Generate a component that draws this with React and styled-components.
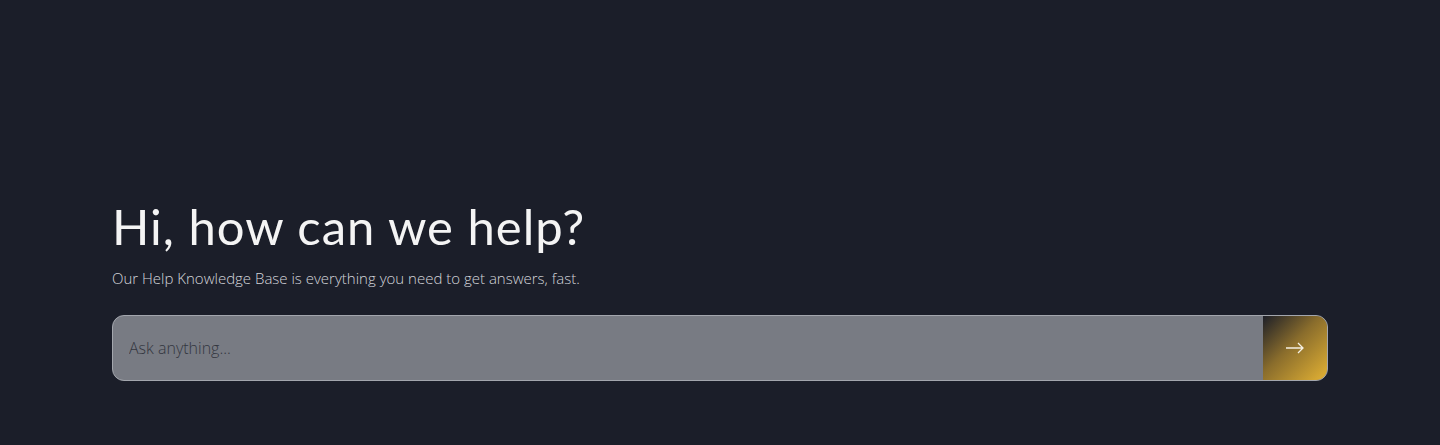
import React from "react";
import styled, { createGlobalStyle } from "styled-components";

const GlobalStyle = createGlobalStyle`
  html, body {
    margin: 0;
    padding: 0;
    background: #1b1e29;
  }
  body {
    font-family: "Open Sans", sans-serif;
  }
`;

const Hero = styled.section`
  min-height: 445px;
  box-sizing: border-box;
  padding: 196px 112px 0;
  background: #1b1e29;
`;

const Title = styled.h1`
  margin: 0;
  font-family: "Lato", sans-serif;
  font-weight: 400;
  font-size: 49px;
  line-height: 60px;
  letter-spacing: 1px;
  color: #f4f4f4;
`;

const Subtitle = styled.p`
  margin: 10px 0 0;
  font-family: "Open Sans", sans-serif;
  font-weight: 300;
  font-size: 15px;
  line-height: 24px;
  color: #d3d5da;
`;

const SearchBox = styled.form`
  margin-top: 25px;
  display: flex;
  height: 66px;
  box-sizing: border-box;
  border: 1px solid #a3a6ad;
  border-radius: 12px;
  overflow: hidden;
  background: #787b83;
`;

const SearchInput = styled.input`
  flex: 1;
  border: none;
  outline: none;
  background: transparent;
  padding: 0 16px;
  font-family: "Open Sans", sans-serif;
  font-weight: 300;
  font-size: 16px;
  color: #2a2d36;

  &::placeholder {
    color: #33363f;
  }
`;

const SubmitButton = styled.button`
  width: 64px;
  border: none;
  cursor: pointer;
  display: flex;
  align-items: center;
  justify-content: center;
  background: linear-gradient(135deg, #1d1f28 0%, #8a6d2c 45%, #e3b234 100%);
`;

const Arrow = () => (
  <svg width="20" height="12" viewBox="0 0 20 12" fill="none">
    <path d="M1 6h17M13 1l5 5-5 5" stroke="#f5f0e4" strokeWidth="1.3" />
  </svg>
);

export default function App() {
  return (
    <>
      <GlobalStyle />
      <Hero>
        <Title>Hi, how can we help?</Title>
        <Subtitle>
          Our Help Knowledge Base is everything you need to get answers, fast.
        </Subtitle>
        <SearchBox onSubmit={(e) => e.preventDefault()}>
          <SearchInput placeholder="Ask anything..." />
          <SubmitButton type="submit" aria-label="Search">
            <Arrow />
          </SubmitButton>
        </SearchBox>
      </Hero>
    </>
  );
}
